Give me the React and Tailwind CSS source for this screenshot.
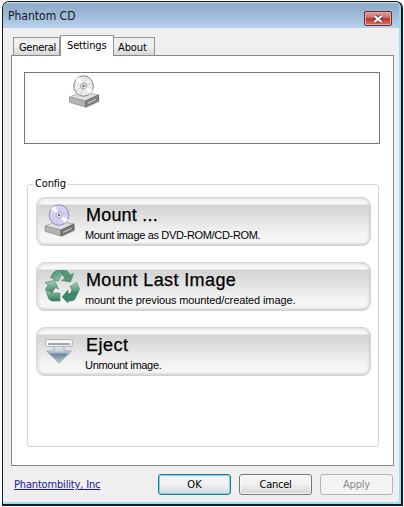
import React from 'react';

const UI = "font-['DejaVu_Sans_Condensed','DejaVu_Sans',sans-serif]";

function DriveIcon({ disc, edge, body, className }) {
  return (
    <svg viewBox="0 0 32 34" className={className}>
      <path d="M1 24 L12 19 L31 22 L31 27 L18 33 L1 28Z" fill="#77777755" />
      <path d="M1 22 L13 17 L30 20 L17 26Z" fill="#dedede" stroke="#999" strokeWidth=".7" />
      <path d="M1 22 L17 26 L17 32 L1 27Z" fill="#b4b4b4" stroke="#909090" strokeWidth=".7" />
      <path d="M17 26 L30 20 L30 26 L17 32Z" fill={body} stroke="#606060" strokeWidth=".8" />
      <path d="M19 27.5 L28 23.3 L28 25 L19 29.4Z" fill="#ddd" stroke="#555" strokeWidth=".5" />
      <ellipse cx="15" cy="11" rx="9.8" ry="10.2" fill={disc} stroke={edge} strokeWidth="1" />
      <path d="M15 11 L7 5 A10 10 0 0 1 11 2Z M15 11 L24 15 A10 10 0 0 1 21 19Z" fill="#fff" />
      <path d="M15 11 L18 2 M15 11 L24 8 M15 11 L7 16 M15 11 L12 20" stroke={edge} strokeWidth=".6" opacity=".4" />
      <circle cx="15" cy="11" r="3" fill="#eee" stroke={edge} strokeWidth=".7" />
      <circle cx="15" cy="11" r="1.2" fill="#666" />
    </svg>
  );
}

function RecycleIcon() {
  return (
    <svg viewBox="0 0 36 34" className="w-9 h-[34px]">
      <defs>
        <linearGradient id="leafA" x1="0" y1="0" x2="1" y2="1">
          <stop offset="0" stopColor="#3d8565" />
          <stop offset="1" stopColor="#a5d3bb" />
        </linearGradient>
        <linearGradient id="leafB" x1="0" y1="0" x2="0" y2="1">
          <stop offset="0" stopColor="#a5d3bb" />
          <stop offset="1" stopColor="#2f7957" />
        </linearGradient>
      </defs>
      <g stroke="#457f65" strokeWidth=".6" strokeLinejoin="round">
        <path d="M12 1.5 H20 L17 6.5 L14 12.5 L6.5 8.5 L9 4Z" fill="url(#leafA)" />
        <path d="M15.5 1.5 H22.5 Q24 2 26 6 L29.5 4.5 L26.5 13 L17.5 11.5 L21 9.5Z" fill="#559678" />
        <path d="M1 13.5 L10.5 11.5 L14.5 20 L11.5 18.5 L7 25.5 L1.5 20.5 L4.2 15.8Z" fill="url(#leafB)" />
        <path d="M1.5 20 L8 24 H16 V32 H8 Q5 31.5 4 28Z" fill="url(#leafB)" />
        <path d="M26 17.5 L32.5 13.5 L35.5 20 L32.5 26 Q28 27 26.5 24L28 21Z" fill="url(#leafB)" />
        <path d="M18 28 L24 21 V24.5 H29 Q32 24.5 34.5 22 L31 30 Q30 32 27 32 H24 V34Z" fill="#40866a" />
      </g>
    </svg>
  );
}

function EjectIcon() {
  return (
    <svg viewBox="0 0 28 25" className="w-7 h-[25px]">
      <defs>
        <linearGradient id="arrow" x1="0" y1="0" x2="0" y2="1">
          <stop offset="0" stopColor="#edf4f7" />
          <stop offset=".4" stopColor="#c3d0da" />
          <stop offset=".55" stopColor="#71869b" />
          <stop offset="1" stopColor="#b7ccda" />
        </linearGradient>
      </defs>
      <path d="M9 5 H19 V12 H26.5 L14 24 L1.5 12 H9Z" fill="url(#arrow)" stroke="#8fa0ae" strokeWidth=".8" />
      <rect x=".7" y=".7" width="26.6" height="6.6" rx="1" fill="#fafafa" stroke="#a4aaaf" strokeWidth=".9" />
      <path d="M3 5 H25" stroke="#858c93" strokeWidth="1.6" />
    </svg>
  );
}

function Action({ icon, title, text, titleClass, textClass }) {
  return (
    <button className="flex w-[335px] h-[49px] rounded-[9px] text-left text-black bg-[linear-gradient(to_bottom,#d0d0d0_0px,#f0f0f0_2px,#fafafa_7px,#d3d3d3_8px,#dadada_15px,#f6f6f6_39px,#f5f5f5_45px,#c8c8c8_49px)] shadow-[inset_2px_0_3px_#d8d8d8,inset_-2px_0_3px_#d0d0d0]">
      <span className="flex w-[49px] h-[49px] pl-2 pt-[7px] shrink-0">{icon}</span>
      <span className="block pt-[6px] font-['Liberation_Sans',Arial,sans-serif] whitespace-nowrap">
        <span className={"block pl-px text-[18px] leading-[24px] [-webkit-text-stroke:0.25px_black] " + titleClass}>{title}</span>
        <span className={"block text-[11px] leading-[16px] " + textClass}>{text}</span>
      </span>
    </button>
  );
}

function DialogButton({ children, look }) {
  return <button className={"w-[73px] h-[21px] rounded-[3px] border text-[11px] leading-[19px] " + look}>{children}</button>;
}

export default function App() {
  return (
    <div className={"w-[404px] h-[507px] pl-[2px] pt-px bg-white text-black " + UI}>
      <div className="flex flex-col w-[401px] h-[505px] rounded-t-[7px] border-2 border-t-[1.5px] border-l-[1.5px] border-[#101b26] bg-[#efefef] overflow-hidden shadow-[inset_-2px_-2px_0_#98e1f2]">
        <header className="flex justify-between h-[26px] shrink-0 pl-[5px] pr-[7px] bg-[linear-gradient(to_bottom,#d7e7f4_0px,#8eabc9_2px,#9ab5d4_10px,#b8d0ea_26px)] border-r-2 border-[#94d8ec]">
          <h1 className="text-[12px] leading-[28px] text-[#101820]">Phantom CD</h1>
          <button className="flex items-center justify-center mt-[9px] w-[28px] h-[15px] rounded-[2px] border border-[#682f32] bg-[linear-gradient(to_bottom,#dfa19a,#cf6c65_45%,#b63432_50%,#d37366)] shadow-[inset_0_0_0_1px_#e0a69f]">
            <svg viewBox="0 0 12 10" className="w-3 h-[10px]">
              <path d="M2.5 2 L9.5 8 M9.5 2 L2.5 8" stroke="#65383d" strokeWidth="3.8" />
              <path d="M2.5 2 L9.5 8 M9.5 2 L2.5 8" stroke="white" strokeWidth="2.3" />
            </svg>
          </button>
        </header>
        <nav className="flex items-end h-[27px] shrink-0 pl-[10px] pt-[6px] text-[11px]">
          <div className="w-[47px] h-[18px] pl-[5px] border border-b-0 border-[#949494] bg-linear-to-b from-[#f1f1f1] from-45% to-[#d7d7d7] leading-[19px] tracking-[-0.3px]">General</div>
          <div className="relative z-10 w-[54px] h-[21px] -mb-px pl-[6px] border border-b-0 border-[#949494] bg-white leading-[19px] tracking-[-0.15px]">Settings</div>
          <div className="w-[41px] h-[18px] pl-1 border border-b-0 border-l-0 border-[#949494] bg-linear-to-b from-[#f1f1f1] from-45% to-[#d7d7d7] leading-[19px] tracking-[-0.1px]">About</div>
        </nav>
        <main className="ml-[8px] w-[383px] h-[411px] shrink-0 border border-[#888] bg-white pt-4 pl-3">
          <section className="w-[356px] h-[72px] border border-[#777] pl-[43px] pt-[2px]">
            <DriveIcon className="w-[33px] h-[34px]" disc="#ececec" edge="#858585" body="#888" />
          </section>
          <fieldset className="mt-[31px] ml-[3px] w-[352px] h-[272px] rounded-[3px] border border-[#d5d5d5] pl-2">
            <legend className="-ml-[3px] px-[2px] text-[11px] leading-[18px] -mt-px tracking-[-0.15px]">Config</legend>
            <div className="flex flex-col gap-4 pt-[4px]">
              <Action title="Mount ..." text="Mount image as DVD-ROM/CD-ROM." titleClass="tracking-[0.2px]" textClass="tracking-[-0.33px]" icon={<DriveIcon className="w-8 h-[34px]" disc="#d5d1f3" edge="#8f8db5" body="#747474" />} />
              <Action title="Mount Last Image" text="mount the previous mounted/created image." titleClass="tracking-[0.38px]" textClass="tracking-[-0.12px]" icon={<RecycleIcon />} />
              <Action title="Eject" text="Unmount image." titleClass="tracking-[0.5px]" textClass="tracking-[-0.3px]" icon={<span className="pl-px pt-[5px]"><EjectIcon /></span>} />
            </div>
          </fieldset>
        </main>
        <footer className="flex items-start pt-[7px] pl-[11px]">
          <a className="w-[144px] text-[11px] leading-[24px] tracking-[-0.17px] text-[#1a1698] underline">Phantombility, Inc</a>
          <div className="flex gap-2 pt-px">
            <DialogButton look="border-[#247c94] bg-linear-to-b from-[#f2f2f2] from-45% to-[#d2dce0] shadow-[inset_0_0_0_1px_#7bd2e8]">OK</DialogButton>
            <DialogButton look="border-[#777] bg-linear-to-b from-[#f3f3f3] from-45% to-[#d3d3d3] shadow-[inset_0_0_0_1px_#f8f8f8] tracking-[-0.25px]">Cancel</DialogButton>
            <DialogButton look="border-[#b5b5b5] bg-[#f3f3f3] text-[#8b8b8b] tracking-[-0.2px]">Apply</DialogButton>
          </div>
        </footer>
      </div>
    </div>
  );
}
